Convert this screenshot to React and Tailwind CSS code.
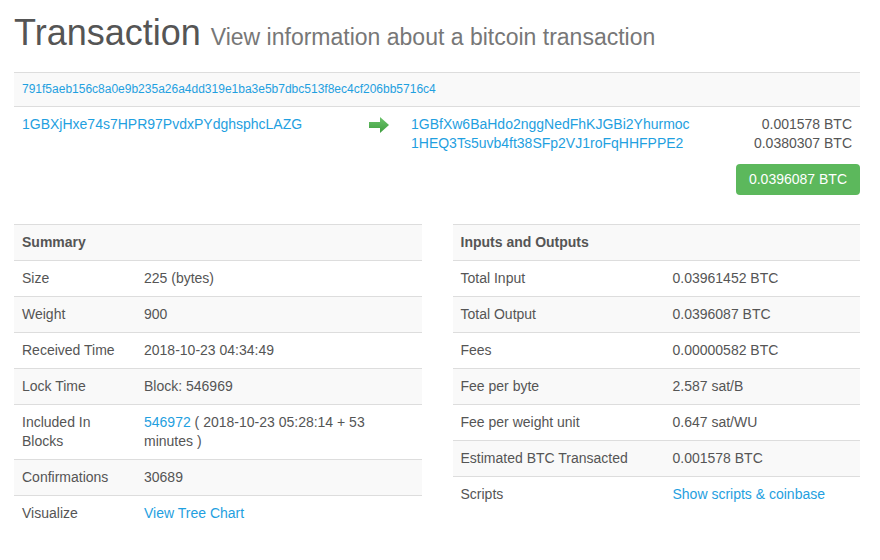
import React from "react";

const LINK = "text-[#1fa0e0]";

const summaryRows = [
  { label: "Size", value: "225 (bytes)" },
  { label: "Weight", value: "900" },
  { label: "Received Time", value: "2018-10-23 04:34:49" },
  { label: "Lock Time", value: "Block: 546969" },
  {
    label: "Included In Blocks",
    value: (
      <>
        <a href="#" className={LINK}>546972</a> ( 2018-10-23 05:28:14 + 53 minutes )
      </>
    ),
  },
  { label: "Confirmations", value: "30689" },
  { label: "Visualize", value: <a href="#" className={LINK}>View Tree Chart</a> },
];

const ioRows = [
  { label: "Total Input", value: "0.03961452 BTC" },
  { label: "Total Output", value: "0.0396087 BTC" },
  { label: "Fees", value: "0.00000582 BTC" },
  { label: "Fee per byte", value: "2.587 sat/B" },
  { label: "Fee per weight unit", value: "0.647 sat/WU" },
  { label: "Estimated BTC Transacted", value: "0.001578 BTC" },
  { label: "Scripts", value: <a href="#" className={LINK}>Show scripts &amp; coinbase</a> },
];

function InfoTable({ title, rows, labelWidth }) {
  return (
    <table className="w-full border-collapse text-[14px] leading-[19px] text-[#555]">
      <tbody>
        <tr className="bg-[#f9f9f9] border-t border-[#ddd]">
          <th colSpan={2} className="px-2 py-2 text-left text-[14px] font-bold">
            {title}
          </th>
        </tr>
        {rows.map((row, i) => (
          <tr
            key={row.label}
            className={`border-t border-[#ddd] ${i % 2 === 1 ? "bg-[#f9f9f9]" : "bg-white"}`}
          >
            <td className={`px-2 py-2 align-top ${labelWidth}`}>{row.label}</td>
            <td className="px-2 py-2 align-top">{row.value}</td>
          </tr>
        ))}
      </tbody>
    </table>
  );
}

function Arrow() {
  return (
    <svg width="20" height="16" viewBox="0 0 20 16">
      <defs>
        <linearGradient id="ag" x1="0" y1="0" x2="0" y2="1">
          <stop offset="0" stopColor="#6cc36c" />
          <stop offset="1" stopColor="#3f9e3f" />
        </linearGradient>
      </defs>
      <path d="M0 5 H11 V0 L20 8 L11 16 V11 H0 Z" fill="url(#ag)" />
    </svg>
  );
}

export default function App() {
  return (
    <div className="w-[880px] h-[560px] bg-white font-['Liberation_Sans',Arial,sans-serif] text-[#555] overflow-hidden">
      <div className="pl-[14px] pr-[20px]">
        <h1 className="mt-[13px] mb-[15px] text-[36px] leading-[40px] text-[#555]">
          Transaction <small className="text-[23px] text-[#777]">View information about a bitcoin transaction</small>
        </h1>

        <div className="border-t border-[#ddd]">
          <div className="bg-[#f9f9f9] px-2 py-2 text-[12px] leading-[17px]">
            <a href="#" className={LINK}>791f5aeb156c8a0e9b235a26a4dd319e1ba3e5b7dbc513f8ec4cf206bb5716c4</a>
          </div>
          <div className="border-t border-[#ddd] px-2 py-2 text-[14px] leading-[19px]">
            <div className="flex">
              <div className="w-[347px]">
                <a href="#" className={LINK}>1GBXjHxe74s7HPR97PvdxPYdghsphcLAZG</a>
              </div>
              <div className="w-[42px] pt-[2px]">
                <Arrow />
              </div>
              <div className="flex-1">
                <div className="flex justify-between">
                  <a href="#" className={LINK}>1GBfXw6BaHdo2nggNedFhKJGBi2Yhurmoc</a>
                  <span>0.001578 BTC</span>
                </div>
                <div className="flex justify-between">
                  <a href="#" className={LINK}>1HEQ3Ts5uvb4ft38SFp2VJ1roFqHHFPPE2</a>
                  <span>0.0380307 BTC</span>
                </div>
              </div>
            </div>
            <div className="flex justify-end mt-[11px] -mr-2">
              <span className="inline-block bg-[#5cb85c] text-white rounded-[4px] px-[13px] py-[6px] text-[14px] leading-[19px]">
                0.0396087 BTC
              </span>
            </div>
          </div>
        </div>

        <div className="mt-[21px] grid grid-cols-2 gap-[31px] items-start">
          <InfoTable title="Summary" rows={summaryRows} labelWidth="w-[122px]" />
          <InfoTable title="Inputs and Outputs" rows={ioRows} labelWidth="w-[212px]" />
        </div>
      </div>
    </div>
  );
}
